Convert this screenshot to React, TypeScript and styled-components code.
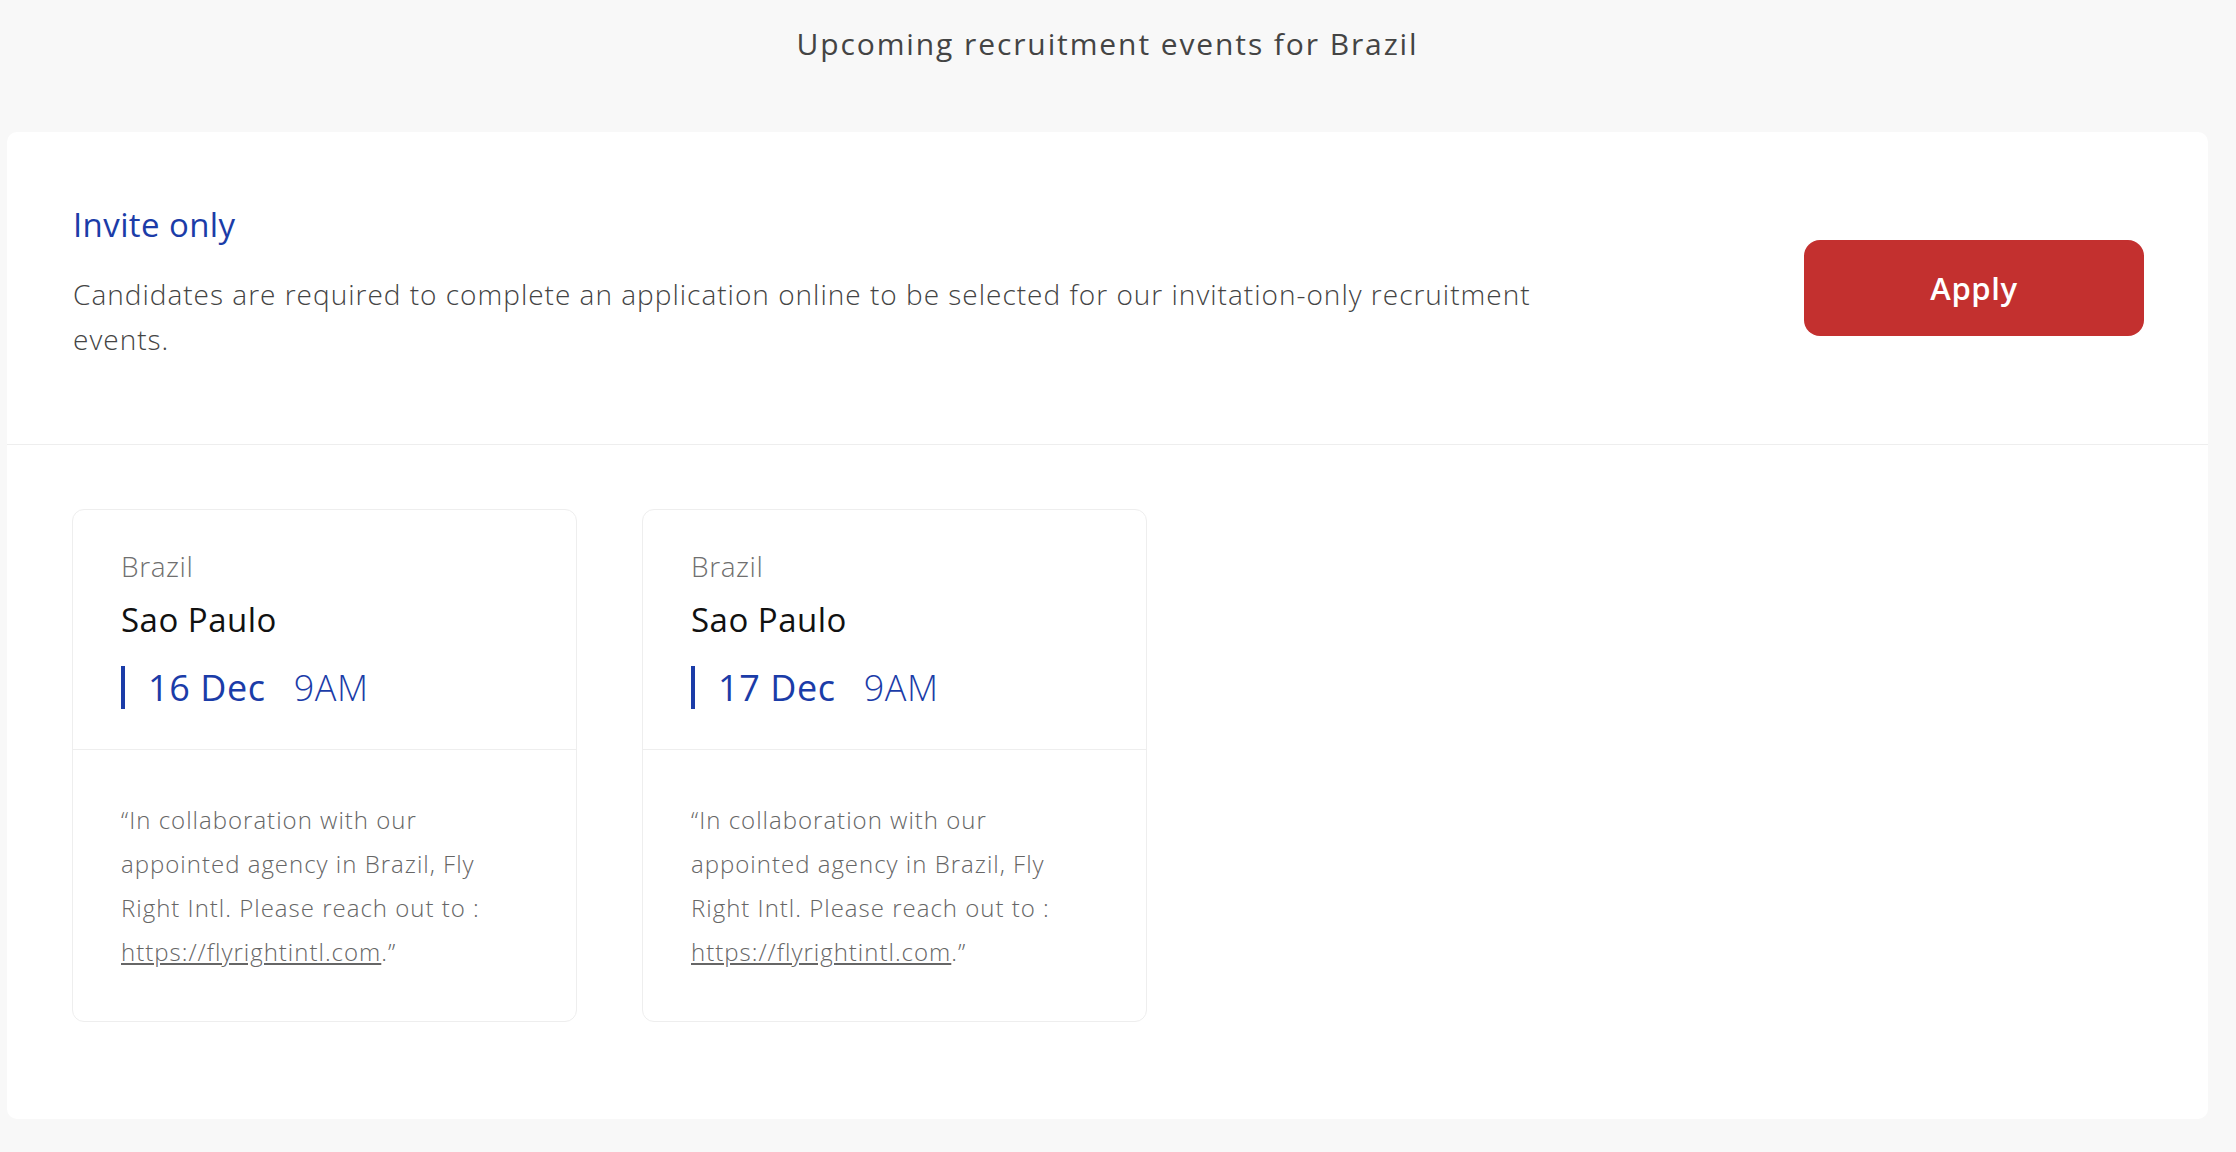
import styled, { createGlobalStyle } from "styled-components"

const GlobalStyle = createGlobalStyle`
    html, body {
        margin: 0;
        padding: 0;
        background-color: #f8f8f8;
        font-family: "Open Sans", "Noto Sans", sans-serif;
    }
`

const Page = styled.div`
    min-height: 1152px;
    padding: 24px 28px 0 7px;
    box-sizing: border-box;
`

const PageTitle = styled.h2`
    margin: 0 0 68px;
    text-align: center;
    font-size: 30px;
    line-height: 40px;
    font-weight: 400;
    letter-spacing: 1.9px;
    color: #444;
`

const Panel = styled.section`
    background-color: #fff;
    border-radius: 10px;
`

const Intro = styled.div`
    display: flex;
    align-items: center;
    justify-content: space-between;
    padding: 68px 64px 82px 66px;
    border-bottom: 1px solid #eee;
`

const IntroText = styled.div`
    max-width: 1520px;
`

const IntroTitle = styled.h3`
    margin: 0 0 22px;
    font-size: 33px;
    line-height: 50px;
    font-weight: 400;
    letter-spacing: 0.4px;
    color: #1b3ca8;
`

const IntroBody = styled.p`
    margin: 0;
    font-size: 28px;
    line-height: 45px;
    font-weight: 300;
    letter-spacing: 1px;
    color: #444;
`

const ApplyButton = styled.button`
    width: 340px;
    height: 96px;
    margin-top: 14px;
    flex-shrink: 0;
    border: none;
    border-radius: 16px;
    background-color: #c3302f;
    color: #fff;
    font-family: "Open Sans", sans-serif;
    font-size: 31px;
    font-weight: 600;
    letter-spacing: 0.6px;
    cursor: pointer;
`

const EventList = styled.div`
    display: flex;
    gap: 65px;
    padding: 64px 65px 97px;
`

const EventCard = styled.article`
    width: 505px;
    box-sizing: border-box;
    border: 1px solid #eee;
    border-radius: 12px;
`

const CardTop = styled.div`
    padding: 36px 50px 40px 48px;
    border-bottom: 1px solid #eee;
`

const Country = styled.div`
    font-size: 28px;
    line-height: 40px;
    font-weight: 300;
    letter-spacing: 0.6px;
    color: #6f6f6f;
`

const City = styled.div`
    margin-top: 12px;
    font-size: 33px;
    line-height: 44px;
    font-weight: 400;
    letter-spacing: 0.5px;
    color: #111;
`

const DateRow = styled.div`
    display: flex;
    align-items: center;
    margin-top: 24px;
    padding-left: 23px;
    border-left: 4px solid #1b3ca8;
    font-size: 36px;
    line-height: 43px;
    letter-spacing: 0.6px;
    color: #1b3ca8;
`

const Day = styled.span`
    font-weight: 400;
`

const Time = styled.span`
    margin-left: 28px;
    font-weight: 300;
`

const CardBody = styled.div`
    padding: 48px 50px 47px 48px;
`

const Note = styled.p`
    margin: 0;
    max-width: 390px;
    font-size: 24px;
    line-height: 44px;
    font-weight: 300;
    letter-spacing: 1px;
    color: #666;

    a {
        color: inherit;
        text-decoration: underline;
    }
`

const events = [
    { country: "Brazil", city: "Sao Paulo", day: "16 Dec", time: "9AM" },
    { country: "Brazil", city: "Sao Paulo", day: "17 Dec", time: "9AM" },
]

export default function App() {
    return (
        <Page>
            <GlobalStyle />
            <PageTitle>Upcoming recruitment events for Brazil</PageTitle>
            <Panel>
                <Intro>
                    <IntroText>
                        <IntroTitle>Invite only</IntroTitle>
                        <IntroBody>
                            Candidates are required to complete an application online to be selected for our invitation-only recruitment events.
                        </IntroBody>
                    </IntroText>
                    <ApplyButton>Apply</ApplyButton>
                </Intro>
                <EventList>
                    {events.map((ev) => (
                        <EventCard key={ev.day}>
                            <CardTop>
                                <Country>{ev.country}</Country>
                                <City>{ev.city}</City>
                                <DateRow>
                                    <Day>{ev.day}</Day>
                                    <Time>{ev.time}</Time>
                                </DateRow>
                            </CardTop>
                            <CardBody>
                                <Note>
                                    “In collaboration with our appointed agency in Brazil, Fly Right Intl. Please reach out to : <a href="#">https://flyrightintl.com</a>.”
                                </Note>
                            </CardBody>
                        </EventCard>
                    ))}
                </EventList>
            </Panel>
        </Page>
    )
}
